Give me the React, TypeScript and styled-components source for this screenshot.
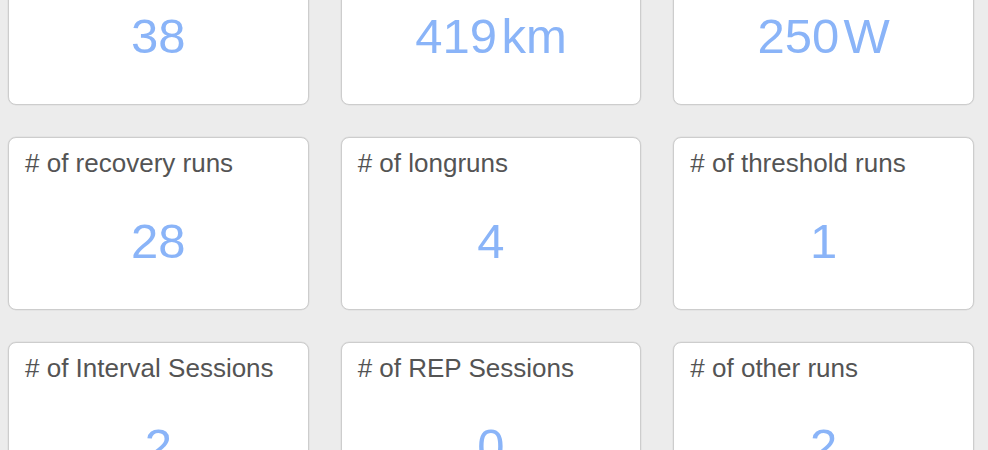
import React from "react";
import styled, { createGlobalStyle } from "styled-components";

const GlobalStyle = createGlobalStyle`
  html, body {
    margin: 0;
    padding: 0;
    background: #ececec;
    font-family: "Liberation Sans", Arial, Helvetica, sans-serif;
  }
  body {
    overflow: hidden;
  }
`;

const Grid = styled.div`
  display: grid;
  grid-template-columns: repeat(3, 1fr);
  column-gap: 32px;
  row-gap: 32px;
  width: 966px;
  margin-top: -68px;
  padding-left: 8px;
  box-sizing: content-box;
`;

const Card = styled.div`
  box-sizing: border-box;
  height: 173px;
  background: #ffffff;
  border: 1px solid #cdcdcd;
  box-shadow: 0 0 0 0.5px #dcdcdc;
  border-radius: 8px;
  padding: 10px 16px 0 16px;
  display: flex;
  flex-direction: column;
`;

const Title = styled.div`
  font-size: 26px;
  line-height: 30px;
  color: #545454;
  white-space: nowrap;
`;

const Value = styled.div`
  margin-top: 35px;
  font-size: 49px;
  line-height: 56px;
  color: #8ab4f8;
  text-align: center;
  white-space: nowrap;
`;

const Unit = styled.span`
  margin-left: 0.09em;
`;

type Stat = { title: string; value: string; unit?: string };

const stats: Stat[] = [
  { title: "# of runs", value: "38" },
  { title: "Total distance", value: "419", unit: "km" },
  { title: "Avg. power", value: "250", unit: "W" },
  { title: "# of recovery runs", value: "28" },
  { title: "# of longruns", value: "4" },
  { title: "# of threshold runs", value: "1" },
  { title: "# of Interval Sessions", value: "2" },
  { title: "# of REP Sessions", value: "0" },
  { title: "# of other runs", value: "2" },
];

export default function App() {
  return (
    <>
      <GlobalStyle />
      <Grid>
        {stats.map((s) => (
          <Card key={s.title}>
            <Title>{s.title}</Title>
            <Value>
              {s.value}
              {s.unit && <Unit>{s.unit}</Unit>}
            </Value>
          </Card>
        ))}
      </Grid>
    </>
  );
}
